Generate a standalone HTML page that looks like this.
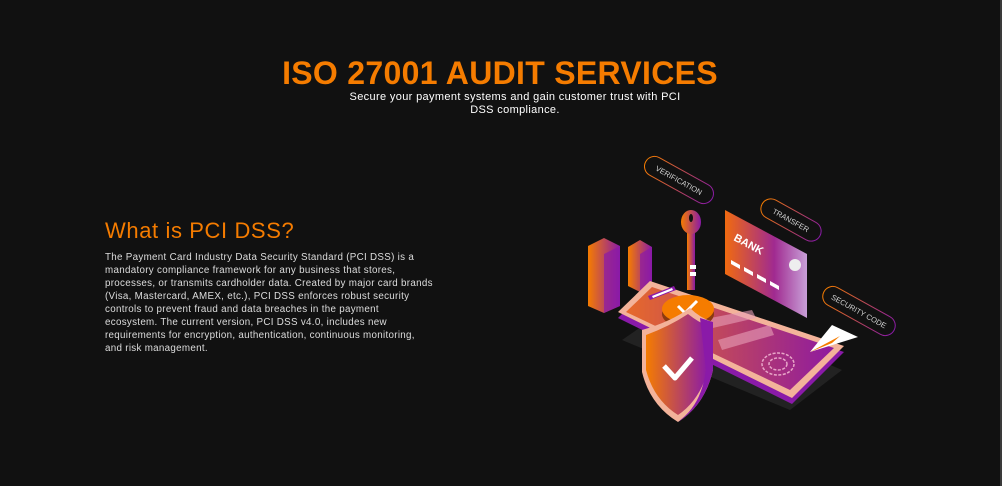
<!DOCTYPE html>
<html><head><meta charset="utf-8"><style>
html,body{margin:0;padding:0;background:#111;}
body{width:1002px;height:486px;position:relative;overflow:hidden;font-family:"Liberation Sans",sans-serif;border-right:2px solid #3a3a3a;box-sizing:border-box;}
h1{position:absolute;left:0;width:1000px;top:55px;margin:0;text-align:center;color:#f57c00;font-size:32px;font-weight:bold;letter-spacing:0.3px;}
.sub{position:absolute;left:300px;width:430px;top:91px;text-align:center;color:#fff;font-size:11px;line-height:13px;letter-spacing:0.35px;white-space:nowrap;}
h2{position:absolute;left:105px;top:218px;margin:0;color:#f57c00;font-size:22px;font-weight:normal;letter-spacing:0.6px;}
p{position:absolute;left:105px;top:251px;margin:0;color:#ddd;font-size:9.8px;line-height:13px;letter-spacing:0.3px;white-space:nowrap;}
svg{position:absolute;left:0;top:0;}
</style></head><body>
<h1>ISO 27001 AUDIT SERVICES</h1>
<div class="sub">Secure your payment systems and gain customer trust with PCI<br>DSS compliance.</div>
<h2>What is PCI DSS?</h2>
<p>The Payment Card Industry Data Security Standard (PCI DSS) is a<br>mandatory compliance framework for any business that stores,<br>processes, or transmits cardholder data. Created by major card brands<br>(Visa, Mastercard, AMEX, etc.), PCI DSS enforces robust security<br>controls to prevent fraud and data breaches in the payment<br>ecosystem. The current version, PCI DSS v4.0, includes new<br>requirements for encryption, authentication, continuous monitoring,<br>and risk management.</p>
<svg width="1002" height="486" viewBox="0 0 1002 486">
<defs>
<linearGradient id="og" x1="0" x2="1"><stop offset="0" stop-color="#f57c00"/><stop offset="1" stop-color="#8a1aa8"/></linearGradient>
<linearGradient id="cg" x1="0" x2="1"><stop offset="0" stop-color="#f06a10"/><stop offset="0.6" stop-color="#a02a90"/><stop offset="1" stop-color="#c8a0d8"/></linearGradient>
<linearGradient id="pg" x1="0" x2="1"><stop offset="0" stop-color="#e76a2a"/><stop offset="1" stop-color="#8e1aa0"/></linearGradient>
</defs>
<polygon points="622,340 790,410 842,370 680,300" fill="#222"/>
<polygon points="588,246 604,238 620,246 620,306 604,313 588,306" fill="url(#og)"/>
<polygon points="604,254 620,246 620,306 604,313" fill="#8a1aa8" opacity=".7"/>
<polygon points="628,247 640,240 652,247 652,286 640,292 628,286" fill="url(#og)"/>
<polygon points="640,254 652,247 652,286 640,292" fill="#8a1aa8" opacity=".7"/>
<polygon points="725,210 807,254 807,318 725,274" fill="url(#cg)"/>
<text x="733" y="240" fill="#fff" font-size="11" font-weight="bold" transform="rotate(28 733 240)">BANK</text>
<circle cx="795" cy="265" r="6" fill="#eee"/>
<g fill="#fff"><polygon points="731,260 740,265 740,269 731,264"/><polygon points="744,267 753,272 753,276 744,271"/><polygon points="757,274 766,279 766,283 757,278"/><polygon points="770,281 779,286 779,290 770,285"/></g>
<polygon points="618,318 650,286 844,352 792,404" fill="#8a1aa8"/>
<polygon points="618,312 650,281 844,346 792,398" fill="#f3b39a"/>
<polygon points="626,312 652,287 834,348 790,390" fill="url(#pg)"/>
<polygon points="700,320 752,310 756,318 704,330" fill="#e8a0b8" opacity=".6"/>
<polygon points="718,340 770,325 774,335 722,350" fill="#e8a0b8" opacity=".6"/>
<ellipse cx="778" cy="364" rx="16" ry="11" fill="none" stroke="#e8a6c8" stroke-width="1.5" stroke-dasharray="3 1.5"/>
<ellipse cx="778" cy="364" rx="9" ry="6" fill="none" stroke="#e8a6c8" stroke-width="1.5" stroke-dasharray="3 1.5"/>
<polygon points="648,296 674,286 676,290 650,300" fill="#8a1aa8"/>
<polygon points="652,296 672,288 673,290 653,298" fill="#fff"/>
<rect x="687" y="225" width="8" height="65" fill="url(#og)"/>
<ellipse cx="691" cy="222" rx="10" ry="12" fill="url(#og)"/>
<ellipse cx="691" cy="218" rx="2" ry="4" fill="#111"/>
<rect x="690" y="265" width="6" height="4" fill="#fff"/><rect x="690" y="272" width="6" height="4" fill="#fff"/>
<ellipse cx="688" cy="314" rx="26" ry="14" fill="#8a3a10"/>
<ellipse cx="688" cy="309" rx="26" ry="14" fill="#f57c00"/>
<path d="M678 306 L685 313 L697 301" stroke="#fff" stroke-width="3" fill="none"/>
<path d="M642 330 Q670 322 690 308 Q700 318 713 322 L713 370 Q705 405 678 422 Q650 405 642 372 Z" fill="#f3b39a"/>
<path d="M646 335 Q670 326 688 314 Q698 322 708 326 L708 370 Q700 400 678 415 Q654 400 646 370 Z" fill="url(#og)"/>
<path d="M700 318 L713 322 L713 370 Q705 405 678 422 L685 416 Q702 400 706 370 Z" fill="#8a1aa8"/>
<path d="M664 366 L675 378 L692 358" stroke="#fff" stroke-width="5" fill="none" stroke-linejoin="round"/>
<polygon points="810,352 832,325 858,337" fill="#fff"/>
<polygon points="810,352 840,336 832,343" fill="#f57c00"/>
<g font-size="7.5" fill="#ddd" stroke-width="1" fill-opacity=".95">
<g transform="translate(679,180) rotate(29)"><rect x="-38" y="-10" width="76" height="20" rx="10" fill="none" stroke="url(#og)"/><text x="0" y="3" text-anchor="middle">VERIFICATION</text></g>
<g transform="translate(791,220) rotate(29)"><rect x="-33" y="-10" width="66" height="20" rx="10" fill="none" stroke="url(#og)"/><text x="0" y="3" text-anchor="middle">TRANSFER</text></g>
<g transform="translate(859,311) rotate(29)"><rect x="-40" y="-10" width="80" height="20" rx="10" fill="none" stroke="url(#og)"/><text x="0" y="3" text-anchor="middle">SECURITY CODE</text></g>
</g>
</svg>
</body></html>
